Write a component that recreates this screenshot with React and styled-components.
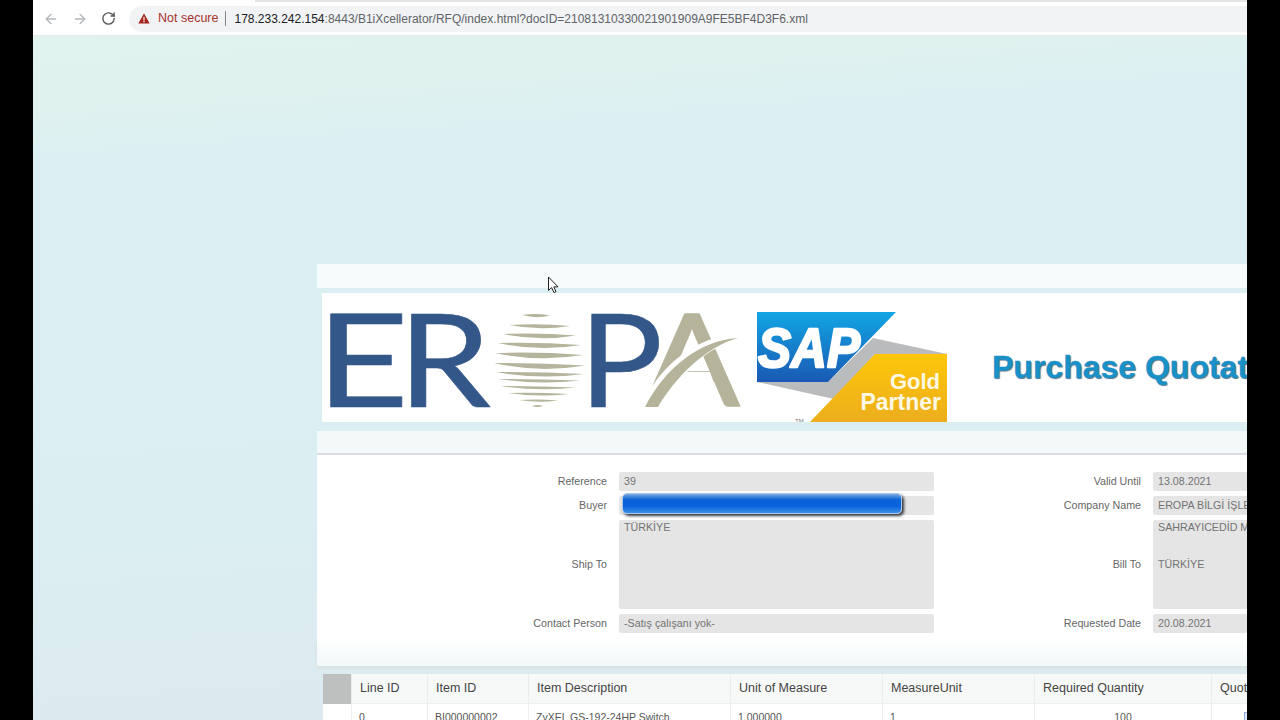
import React from 'react';
import styled, { createGlobalStyle } from 'styled-components';
import { ArrowLeft, ArrowRight, RotateCw } from 'lucide-react';

const GlobalStyle = createGlobalStyle`
  html, body {
    margin: 0;
    height: 720px;
    overflow: hidden;
    background: #000;
    font-family: "Liberation Sans", Arial, sans-serif;
  }
`;

const Frame = styled.div`
  position: relative;
  width: 1214px;
  height: 720px;
  margin-left: 33px;
  display: flex;
  flex-direction: column;
  overflow: hidden;
`;

const BrowserBar = styled.div`
  height: 36px;
  flex: none;
  box-sizing: border-box;
  background: #fff;
  border-bottom: 1px solid #e6eaea;
`;

const TabEdge = styled.div`
  height: 2px;
  margin-left: 222px;
  background: #e3e5e7;
`;

const Toolbar = styled.div`
  height: 33px;
  display: flex;
  align-items: center;
  padding-left: 10px;
`;

const NavButton = styled.span`
  width: 16px;
  height: 16px;
  margin-right: 13px;
  display: flex;
  color: ${props => props.disabled ? '#b4b8bb' : '#54585c'};
`;

const Omnibox = styled.div`
  flex: 1;
  height: 26px;
  margin-left: -1px;
  padding-left: 9px;
  display: flex;
  align-items: center;
  background: #f1f3f4;
  border-radius: 13px 0 0 13px;
  font-size: 12px;
  white-space: nowrap;
`;

const NotSecure = styled.span`
  margin-left: 8px;
  padding-right: 7px;
  color: #a8322e;
  font-size: 12.5px;
  border-right: 1px solid #80868b;
  line-height: 15px;
`;

const Host = styled.span`
  margin-left: 8px;
  color: #202124;
`;

const UrlRest = styled.span`
  color: #5f6368;
`;

const PageBody = styled.div`
  flex: 1;
  padding: 228px 0 0 284px;
  overflow: hidden;
  background: linear-gradient(176deg, #e0f3ee 0%, #dff2ee 9%, #dcf0f3 16%, #dbeef1 65%, #dde9ef 100%);
`;

const Panel = styled.div`
  width: 1100px;
`;

const TopBand = styled.div`
  height: 24px;
  margin-bottom: 5px;
  background: #f4fbfa;
`;

const LogoBand = styled.div`
  height: 129px;
  margin: 0 0 9px 5px;
  display: flex;
  background: #fff;
`;

const LogoSvg = styled.svg`
  width: 640px;
  height: 129px;
  flex: none;
`;

const Title = styled.div`
  margin: 55px 0 0 30px;
  color: #1a90c8;
  font-size: 32px;
  line-height: 38px;
  font-weight: 700;
  white-space: nowrap;
  text-shadow: 1px 1px 1px #5f7482;
  -webkit-text-stroke: 0.3px #1a90c8;
`;

const SectionBand = styled.div`
  height: 22px;
  background: #f3f9f9;
  border-bottom: 2px solid #d9dbe6;
`;

const FormArea = styled.div`
  position: relative;
  display: flex;
  padding: 17px 0 7px;
  background: #fff;
`;

const FieldGrid = styled.div`
  flex: none;
  display: grid;
  grid-template-columns: ${props => props.labelWidth}px 315px;
  grid-template-rows: 19px 19px 89px 19px;
  column-gap: 12px;
  row-gap: 5px;
`;

const Label = styled.div`
  align-self: center;
  margin-top: -1px;
  text-align: right;
  color: #666;
  font-size: 10.7px;
`;

const Field = styled.div`
  padding: 0 5px;
  background: #e5e5e5;
  border-radius: 2px;
  color: #737373;
  font-size: 10.7px;
  line-height: 19px;
  white-space: pre;
  overflow: hidden;
`;

const FieldLines = styled.div`
  margin-top: -2px;
  line-height: 18.5px;
`;

const Redaction = styled.div`
  position: absolute;
  left: 305px;
  top: 38px;
  width: 280px;
  height: 21px;
  box-sizing: border-box;
  border: 1px solid #a8c8ea;
  border-radius: 5px;
  background: linear-gradient(#7aa8e2 0%, #0b63d6 30%, #0a63dc 65%, #3f8fe8 100%);
  box-shadow: 2px 2px 3px #33363a;
`;

const FormFade = styled.div`
  height: 26px;
  background: linear-gradient(#fdfefe, #f2f8f8);
  box-shadow: 0 2px 3px #d5dfdf;
  margin-bottom: 8px;
`;

const Table = styled.div`
  margin-left: 6px;
`;

const TableRow = styled.div`
  display: grid;
  grid-template-columns: 28px 76px 101px 202px 152px 152px 177px 100px;
`;

const HeaderCell = styled.div`
  height: 30px;
  box-sizing: border-box;
  padding-left: 8px;
  background: ${props => props.corner ? '#bdc0bf' : '#f7f8f8'};
  border-left: ${props => props.corner ? 'none' : '1px solid #e8eded'};
  border-bottom: ${props => props.corner ? 'none' : '1px solid #eef0f0'};
  color: #444;
  font-size: 12.5px;
  line-height: 29px;
  white-space: nowrap;
`;

const Cell = styled.div`
  height: 24px;
  padding: 0 ${props => props.center ? '7px' : '0'} 0 7px;
  background: #fff;
  border-left: ${props => props.first ? 'none' : '1px solid #e8eded'};
  color: #555;
  font-size: 10.5px;
  line-height: 27px;
  text-align: ${props => props.center ? 'center' : 'left'};
  white-space: nowrap;
`;

const QtyInput = styled.span`
  display: block;
  width: 12px;
  height: 12px;
  margin: 8px 0 0 25px;
  box-sizing: border-box;
  border: 1px solid #8fb0d8;
  background: #dbe8f6;
`;

const Pointer = styled.svg`
  position: absolute;
  left: 514px;
  top: 276px;
  width: 13px;
  height: 18px;
`;

const stripes = [
  [522, 550, 315, 3, 1], [509, 570, 325, 4, 2], [503, 576, 334, 4.6, 3], [498, 581, 343, 5, 4],
  [495, 583, 353, 5.4, 4], [494, 585, 363, 5.4, 5], [496, 584, 372, 4, 4], [498, 580, 379, 3.2, 3],
  [501, 576, 386, 2.8, 3], [508, 569, 393, 2.6, 2], [519, 558, 400, 2.2, 1], [532, 543, 406, 2, 0]
];

const EropaLogo = () => (
  <g>
    <g fill="#34578a" stroke="#34578a" strokeWidth="0.6" strokeLinejoin="round" fontFamily="Lato, sans-serif" fontSize="129">
      <text x="316" y="407" textLength="93" lengthAdjust="spacingAndGlyphs">E</text>
      <text x="398" y="407" textLength="93" lengthAdjust="spacingAndGlyphs">R</text>
      <text x="579" y="407" textLength="84" lengthAdjust="spacingAndGlyphs">P</text>
    </g>
    {stripes.map(([x1, x2, y, thick, sag]) => (
      <path
        key={y}
        fill="#b5b49c"
        d={`M${x1} ${y}Q${(x1 + x2) / 2} ${y + sag + thick} ${x2} ${y + sag / 2}Q${(x1 + x2) / 2} ${y + sag - thick} ${x1} ${y}z`}
      />
    ))}
    <text x="644" y="406" fill="#b5b49b" stroke="#b5b49b" strokeWidth="1.6" strokeLinejoin="round" fontFamily="Lato, sans-serif" fontSize="128" textLength="96" lengthAdjust="spacingAndGlyphs">A</text>
    <polygon fill="#fff" points="670,372 710,372 717,391 661,391" />
    <path fill="#fff" d="M640 408C660 365 695 336 740 334L740 340C705 346 680 375 664 408z" />
    <path fill="#b5b49b" d="M738 338C700 340 665 368 645 407L658 407C675 378 705 347 738 338z" />
  </g>
);

const SapLogo = () => (
  <g>
    <defs>
      <linearGradient id="sapBlue" x1="0" y1="0" x2="0" y2="1">
        <stop offset="0" stopColor="#12a5e4" />
        <stop offset="1" stopColor="#1a59b3" />
      </linearGradient>
      <linearGradient id="sapGold" x1="0" y1="0" x2="0" y2="1">
        <stop offset="0" stopColor="#fdc609" />
        <stop offset="1" stopColor="#ecae1e" />
      </linearGradient>
    </defs>
    <polygon fill="#b9bbbd" points="757,382 828,382 873,338 947,354 875,354 834,399" />
    <polygon fill="url(#sapBlue)" points="757,312 896,312 828,382 757,382" />
    <polygon fill="url(#sapGold)" points="875,354 947,354 947,422 810,422" />
    <text x="758" y="367" fill="#fff" stroke="#fff" strokeWidth="2.4" strokeLinejoin="round" fontFamily="'Liberation Sans', sans-serif" fontWeight="700" fontStyle="italic" fontSize="56" textLength="102" lengthAdjust="spacingAndGlyphs">SAP</text>
    <text x="940" y="389" fill="#fdf8e4" textAnchor="end" fontFamily="'Liberation Sans', sans-serif" fontWeight="700" fontSize="22">Gold</text>
    <text x="941" y="410" fill="#fdf8e4" textAnchor="end" fontFamily="'Liberation Sans', sans-serif" fontWeight="700" fontSize="23">Partner</text>
    <text x="795" y="423" fill="#777" fontFamily="'Liberation Sans', sans-serif" fontSize="6">TM</text>
  </g>
);

const columns = ['Line ID', 'Item ID', 'Item Description', 'Unit of Measure', 'MeasureUnit', 'Required Quantity', 'Quot'];

const App = () => {
  return (
    <>
      <GlobalStyle />
      <Frame>
        <BrowserBar>
          <TabEdge />
          <Toolbar>
            <NavButton disabled><ArrowLeft size={16} /></NavButton>
            <NavButton disabled><ArrowRight size={16} /></NavButton>
            <NavButton><RotateCw size={15} strokeWidth={2.2} /></NavButton>
            <Omnibox>
              <svg width="12" height="11" viewBox="0 0 12 11">
                <path fill="#a8261f" d="M6 0.5L11.7 10.5H0.3z" />
                <path fill="#fff" d="M5.4 4H6.6V7.4H5.4zM5.4 8H6.6V9.2H5.4z" />
              </svg>
              <NotSecure>Not secure</NotSecure>
              <Host>178.233.242.154<UrlRest>:8443/B1iXcellerator/RFQ/index.html?docID=21081310330021901909A9FE5BF4D3F6.xml</UrlRest></Host>
            </Omnibox>
          </Toolbar>
        </BrowserBar>
        <PageBody>
          <Panel>
            <TopBand />
            <LogoBand>
              <LogoSvg viewBox="322 293 640 129">
                <EropaLogo />
                <SapLogo />
              </LogoSvg>
              <Title>Purchase Quotation</Title>
            </LogoBand>
            <SectionBand />
            <FormArea>
              <FieldGrid labelWidth={290}>
                <Label>Reference</Label>
                <Field>39</Field>
                <Label>Buyer</Label>
                <Field />
                <Label>Ship To</Label>
                <Field><FieldLines>TÜRKİYE</FieldLines></Field>
                <Label>Contact Person</Label>
                <Field>-Satış çalışanı yok-</Field>
              </FieldGrid>
              <FieldGrid labelWidth={207}>
                <Label>Valid Until</Label>
                <Field>13.08.2021</Field>
                <Label>Company Name</Label>
                <Field>EROPA BİLGİ İŞLEM</Field>
                <Label>Bill To</Label>
                <Field><FieldLines>{'SAHRAYICEDİD MAH.\n\nTÜRKİYE'}</FieldLines></Field>
                <Label>Requested Date</Label>
                <Field>20.08.2021</Field>
              </FieldGrid>
              <Redaction />
            </FormArea>
            <FormFade />
            <Table>
              <TableRow>
                <HeaderCell corner />
                {columns.map(name => <HeaderCell key={name}>{name}</HeaderCell>)}
              </TableRow>
              <TableRow>
                <Cell first />
                <Cell>0</Cell>
                <Cell>BI000000002</Cell>
                <Cell>ZyXEL GS-192-24HP Switch</Cell>
                <Cell>1,000000</Cell>
                <Cell>1</Cell>
                <Cell center>100</Cell>
                <Cell><QtyInput /></Cell>
              </TableRow>
            </Table>
          </Panel>
        </PageBody>
        <Pointer viewBox="0 0 13 18">
          <path fill="#fff" stroke="#222" strokeWidth="1" d="M1.5 1V14.5L4.6 11.6L7 16.6L9 15.6L6.8 10.9H11z" />
        </Pointer>
      </Frame>
    </>
  );
};

export default App;
